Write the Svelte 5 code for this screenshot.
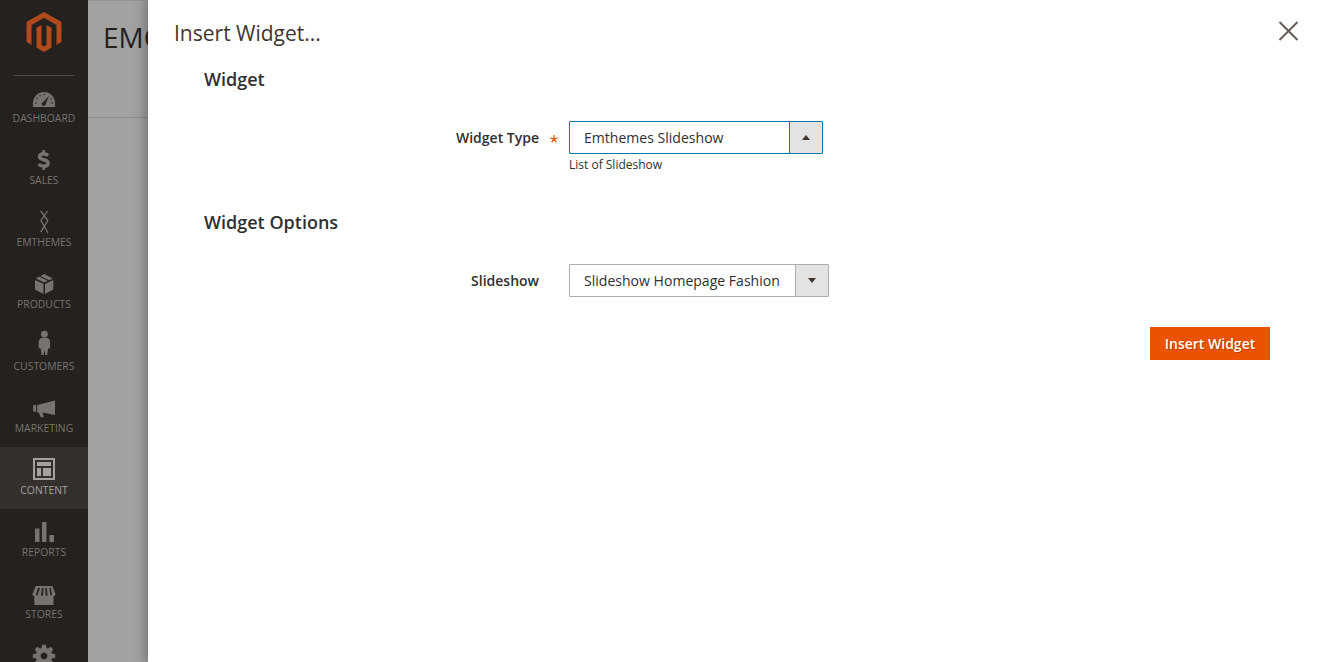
<script>
  const items = ['Dashboard', 'Sales', 'Emthemes', 'Products', 'Customers', 'Marketing', 'Content', 'Reports', 'Stores', 'System'];
  const teeth = [0, 45, 90, 135, 180, 225, 270, 315];
</script>

<div class="page">
  <nav>
    <div class="brand">
      <svg width="36" height="40" viewBox="0 0 36 40">
        <path d="M18 0 35.5 10V30L30.5 33V13L18 5.8 5.5 13V33L.5 30V10Z" />
        <path d="M10.5 15.8 15.5 13V33L18 34.6 20.5 33V13L25.5 15.8V35.8L18 40 10.5 35.8Z" />
      </svg>
    </div>
    {#each items as name}
      <a class:active={name === 'Content'}>
        <svg width="32" height="30" viewBox="0 0 32 30">
          {#if name === 'Dashboard'}
            <path d="M5 26V22a11 11 0 0 1 22 0v4Z" />
            <g class="cut">
              <path d="m21 15-3.2 7.8a2 2 0 1 1-2.7-1.8Z" />
              <circle cx="7.8" cy="22" r=".8" /><circle cx="9.2" cy="17.5" r=".8" /><circle cx="12" cy="14.7" r=".8" />
              <circle cx="16" cy="13.5" r=".8" /><circle cx="23.2" cy="18" r=".8" /><circle cx="24.2" cy="22" r=".8" />
            </g>
          {:else if name === 'Sales'}
            <path class="line" stroke-width="3.6" d="M20 12.7C18.8 11.4 17 10.9 15.3 10.9c-2.5 0-3.8 1.1-3.8 2.7 0 4.3 8.6 2 8.6 6.4 0 2-1.7 3.2-4.3 3.2-2.2 0-4-.8-5.2-2.1" />
            <path class="line" stroke-width="2.6" d="M15.7 7v4.3M15.7 23v4" />
          {:else if name === 'Emthemes'}
            <path class="line" stroke-width="1.3" d="M12.7 6 19.8 15.5 12.7 27.2M19.6 6 13 15.5 20 28" />
          {:else if name === 'Products'}
            <path d="m7 13 8.5 4v10L7 22.6ZM17 17l8.3-4v9.6L17 27ZM7.8 11.4l3.4-1.8 8.5 4.2-3.5 1.7ZM12.4 9l3.8-2 8.6 4.4-3.8 1.9Z" />
          {:else if name === 'Customers'}
            <circle cx="16.4" cy="5.2" r="3.4" />
            <path d="M13 9h6.8q2.2 1 2.3 4v6l-1.6.5-.4 0-.8 6.5H17.2l-.8-5-.8 5h-2.1l-.8-6.5h-.4L10.7 19v-6q.1-3 2.3-4Z" />
          {:else if name === 'Marketing'}
            <path d="M9.3 14 27 9.5V24l-12.4-2.5 1.2 4.8h-2.9l-2.2-4.8H9.3ZM5.5 14h2.7v6.8H5.5q-1.2-3.4 0-6.8Z" />
          {:else if name === 'Content'}
            <path fill-rule="evenodd" d="M5 5h22v22H5ZM7 7v18h18V7ZM9 9h14v4H9ZM9 15h4v8H9ZM15 15h8v8h-8Z" />
          {:else if name === 'Reports'}
            <path d="M7 13.5h4.5V27H7ZM14 7h4.5v20H14ZM21.4 20H26v7h-4.6Z" />
          {:else if name === 'Stores'}
            <path fill-rule="evenodd" d="M7.7 9h16.6L27.5 17q0 2-2 2.2V28H6.3V19.2Q4.3 19 4.5 17ZM10 11 7.8 18.5 9.4 18.5 12 11ZM14 11 13 18.5H15L15.5 11ZM17.3 11 17.6 18.5H19.6L18.8 11ZM21.3 11 22.6 18.5H24.2L22.8 11Z" />
          {:else}
            {#each teeth as angle}
              <path d="M14.2 5.8h3.6l1 4.4h-5.6Z" transform="rotate({angle} 16 17)" />
            {/each}
            <path fill-rule="evenodd" d="M16 8.8a8.2 8.2 0 1 0 .01 0ZM16 13.6a3.4 3.4 0 1 1-.01 0Z" />
          {/if}
        </svg>
        <span>{name}</span>
      </a>
    {/each}
  </nav>

  <div class="behind"><header>EMOS</header></div>

  <main>
    <div class="title">
      <h1>Insert Widget...</h1>
      <button class="close" aria-label="Close">
        <svg width="21" height="20" viewBox="0 0 21 20"><path d="M1.5 1 19.5 19M19.5 1 1.5 19" /></svg>
      </button>
    </div>

    <section>
      <h2>Widget</h2>
      <div class="field">
        <span class="label">Widget Type<i><svg width="8" height="8" viewBox="0 0 8 8"><path d="M4 0v4M.2 2.8 4 4l3.8-1.2M1.7 7.4 4 4l2.3 3.4" /></svg></i></span>
        <div>
          <div class="select open"><span>Emthemes Slideshow</span><b></b></div>
          <p>List of Slideshow</p>
        </div>
      </div>
    </section>

    <section class="options">
      <h2>Widget Options</h2>
      <div class="field">
        <span class="label">Slideshow<i></i></span>
        <div class="select second"><span>Slideshow Homepage Fashion</span><b></b></div>
      </div>
    </section>

    <footer><button class="insert">Insert Widget</button></footer>
  </main>
</div>

<style>
  :global(body) { margin: 0; overflow: hidden; }
  .page { display: flex; width: 1326px; height: 662px; overflow: hidden; background: #fff; font-family: "Open Sans", sans-serif; color: #303030; }
  nav { flex: none; width: 88px; height: 662px; overflow: hidden; background: #25211e; }
  .brand { box-sizing: border-box; height: 76px; margin: 0 14px -1px; padding-top: 12px; border-bottom: 1px solid #4f4a47; }
  .brand svg { display: block; margin: 0 auto; fill: #b14a1c; }
  a { box-sizing: border-box; display: flex; flex-direction: column; align-items: center; height: 62px; padding-top: 6px; color: #777370; font-size: 10.4px; line-height: 14px; text-transform: uppercase; }
  a svg { display: block; flex: none; fill: currentColor; }
  a .cut { fill: #25211e; }
  a .line { fill: none; stroke: currentColor; }
  a.active { background: #35302d; color: #a5a19d; }
  .behind { flex: none; width: 60px; overflow: hidden; background: #a2a2a2; }
  header { box-sizing: border-box; height: 118px; padding: 17px 0 0 15px; border-top: 1px solid #959595; border-bottom: 1px solid #8d8d8d; color: #24211f; font-size: 28px; line-height: 38px; white-space: nowrap; }
  main { flex: 1; position: relative; background: #fff; box-shadow: 0 0 12px 2px rgba(0, 0, 0, .35); }
  .title { display: flex; justify-content: space-between; height: 66px; padding: 20px 27px 0 26px; box-sizing: border-box; }
  h1 { margin: 0; font-size: 21px; line-height: 26px; font-weight: 400; color: #41362f; }
  button { border: 0; padding: 0; font-family: inherit; }
  .close { height: 20px; margin-top: 1px; background: none; }
  .close svg { display: block; fill: none; stroke: #635c57; stroke-width: 2; }
  section { height: 143px; padding-left: 56px; box-sizing: border-box; }
  h2 { margin: 0 0 29px; font-size: 18px; line-height: 26px; font-weight: 600; color: #303030; }
  .field { display: flex; font-size: 14px; }
  .label { display: flex; justify-content: flex-end; width: 365px; height: 33px; line-height: 33px; font-weight: 600; }
  .label i { width: 30px; padding: 14px 0 0 11px; box-sizing: border-box; line-height: 0; }
  .label i svg { fill: none; stroke: #e25d14; stroke-width: 1.3; }
  .select { display: flex; box-sizing: border-box; width: 254px; height: 33px; border: 1px solid #adadad; border-radius: 1px; line-height: 31px; }
  .select span { flex: 1; padding-left: 14px; white-space: nowrap; font-size: 14.05px; }
  .select b { width: 32px; border-left: 1px solid #adadad; background: #e3e3e3; display: flex; align-items: center; justify-content: center; }
  .select b::after { content: ""; border: 4px solid transparent; border-top: 5px solid #41362f; border-bottom: 0; }
  .select.open, .select.open b { border-color: #007bad; }
  .select.open b::after { border-top: 0; border-bottom: 5px solid #41362f; }
  .second { width: 260px; }
  p { margin: 3px 0 0; font-size: 12px; line-height: 16px; }
  footer { display: flex; justify-content: flex-end; padding: 0 56px; margin-top: -25px; }
  .insert { width: 120px; height: 33px; background: #eb5202; color: #fff; font-size: 14px; font-weight: 600; line-height: 33px; text-shadow: 1px 1px 0 rgba(0, 0, 0, .25); }
</style>
